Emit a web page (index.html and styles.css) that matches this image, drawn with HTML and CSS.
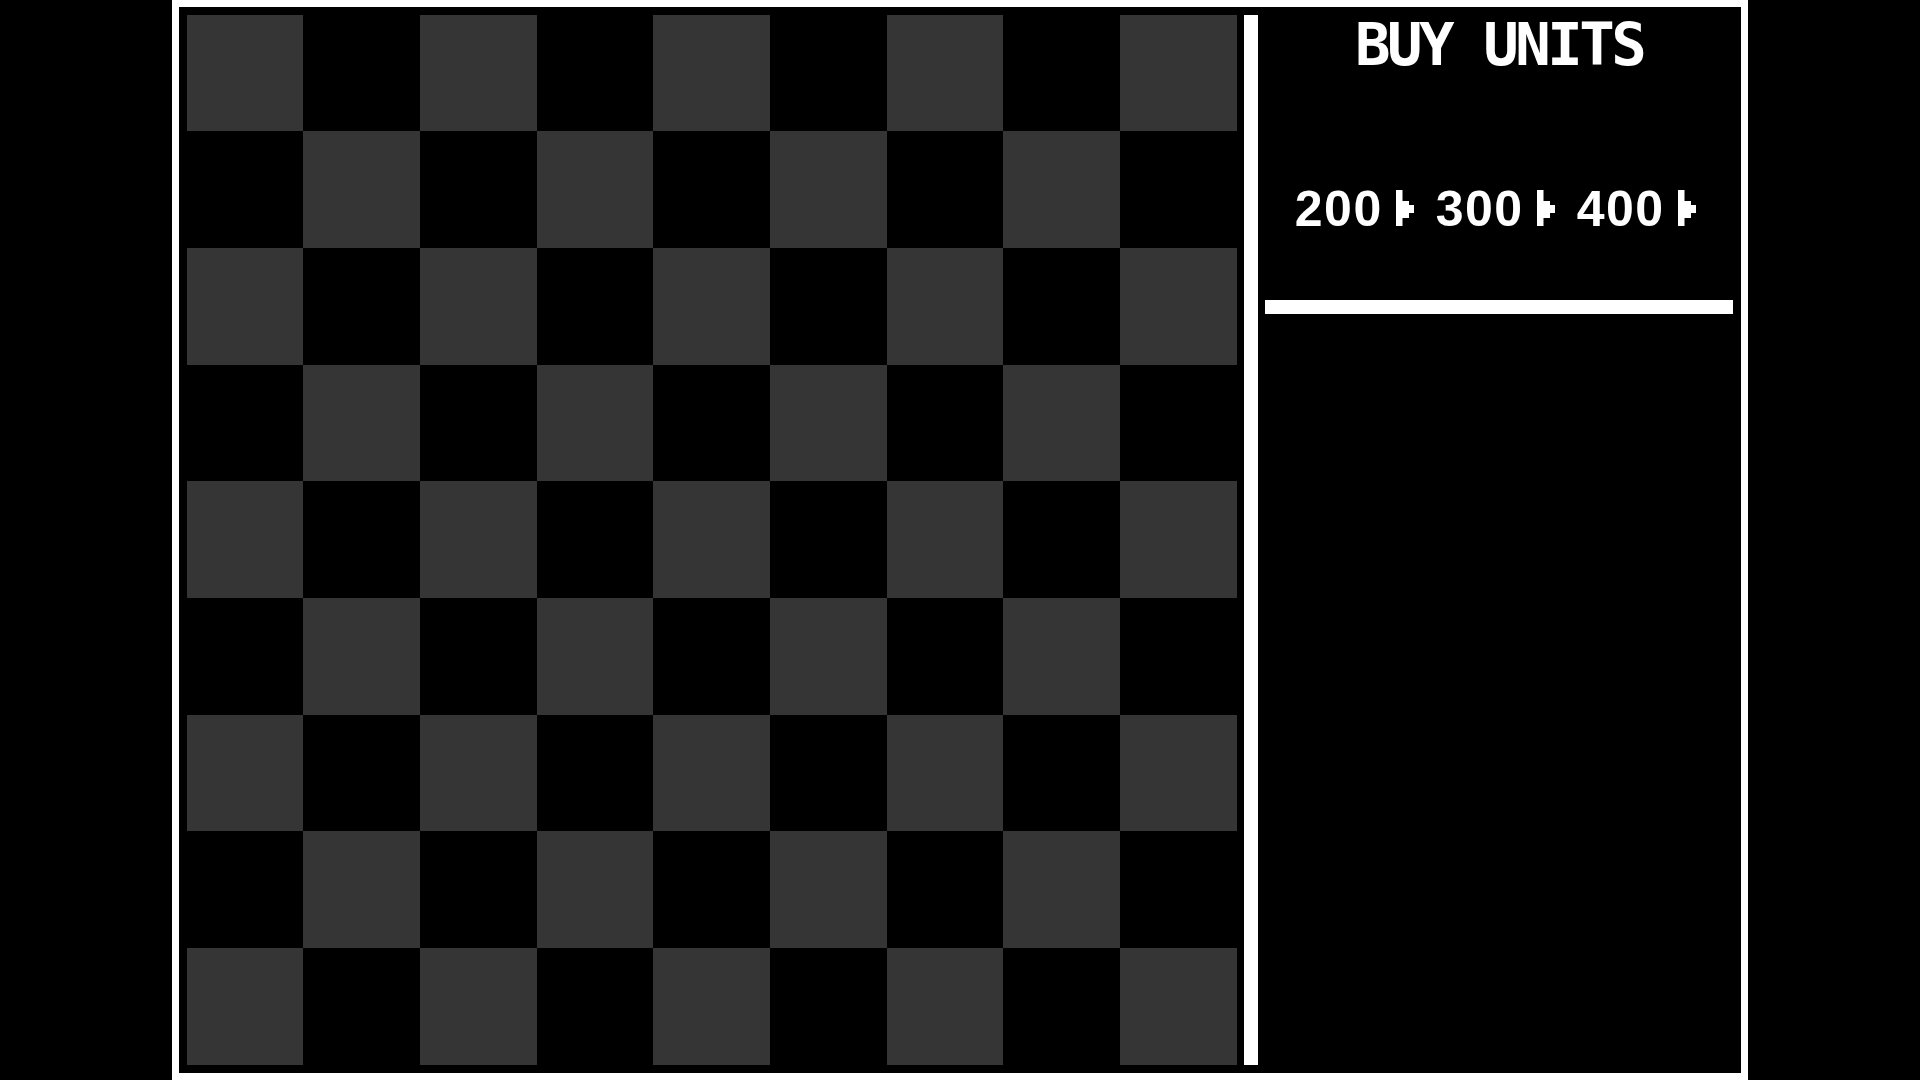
FILE: index.html
```html
<!DOCTYPE html>
<html lang="en">
<head>
<meta charset="utf-8">
<title>Buy Units</title>
<link rel="stylesheet" href="styles.css">
</head>
<body>
<div class="frame">
  <div class="board">
    <div></div><div></div><div></div><div></div><div></div><div></div><div></div><div></div><div></div>
    <div></div><div></div><div></div><div></div><div></div><div></div><div></div><div></div><div></div>
    <div></div><div></div><div></div><div></div><div></div><div></div><div></div><div></div><div></div>
    <div></div><div></div><div></div><div></div><div></div><div></div><div></div><div></div><div></div>
    <div></div><div></div><div></div><div></div><div></div><div></div><div></div><div></div><div></div>
    <div></div><div></div><div></div><div></div><div></div><div></div><div></div><div></div><div></div>
    <div></div><div></div><div></div><div></div><div></div><div></div><div></div><div></div><div></div>
    <div></div><div></div><div></div><div></div><div></div><div></div><div></div><div></div><div></div>
    <div></div><div></div><div></div><div></div><div></div><div></div><div></div><div></div><div></div>
  </div>
  <div class="divider"></div>
  <div class="panel">
    <h1 class="title">BUY UNITS</h1>
    <div class="prices">
      <div class="price"><span>200</span><svg class="coin" viewBox="0 0 18 36" width="18" height="36"><rect x="0" y="0" width="6.5" height="36"/><rect x="6" y="11" width="7" height="17"/><rect x="12.5" y="15" width="5.5" height="8"/></svg></div>
      <div class="price"><span>300</span><svg class="coin" viewBox="0 0 18 36" width="18" height="36"><rect x="0" y="0" width="6.5" height="36"/><rect x="6" y="11" width="7" height="17"/><rect x="12.5" y="15" width="5.5" height="8"/></svg></div>
      <div class="price"><span>400</span><svg class="coin" viewBox="0 0 18 36" width="18" height="36"><rect x="0" y="0" width="6.5" height="36"/><rect x="6" y="11" width="7" height="17"/><rect x="12.5" y="15" width="5.5" height="8"/></svg></div>
    </div>
    <div class="rule"></div>
  </div>
</div>
</body>
</html>
```

FILE: styles.css
```css
html, body {
  margin: 0;
  padding: 0;
  background: #000;
  height: 100%;
  overflow: hidden;
}

body {
  font-family: "DejaVu Sans Mono", "Liberation Mono", monospace;
  color: #fff;
}

.frame {
  width: 1562px;
  height: 1066px;
  margin: 0 auto;
  border: 7px solid #fff;
  display: flex;
  align-items: stretch;
  padding: 0;
  background: #000;
}

.board {
  margin: 7.7px 7.7px 8px 7.7px;
  width: 1050px;
  height: 1050px;
  display: grid;
  grid-template-columns: repeat(9, 1fr);
  grid-template-rows: repeat(9, 1fr);
  flex: none;
}

.board > div {
  background: #000;
}

.board > div:nth-child(odd) {
  background: #353535;
}

.divider {
  width: 14px;
  flex: none;
  background: #fff;
  margin: 7.7px 0 8px 0;
}

.panel {
  flex: 1;
  display: flex;
  flex-direction: column;
  padding: 7.7px 8px 0 7px;
}

.title {
  margin: 0;
  font-size: 59px;
  line-height: 59px;
  font-weight: bold;
  letter-spacing: -3.5px;
  text-align: center;
  height: 59px;
}

.prices {
  margin-top: 110px;
  display: flex;
  justify-content: center;
  gap: 22px;
  height: 50px;
  padding-right: 8px;
}

.price {
  display: flex;
  align-items: flex-start;
  font-family: "Liberation Sans", Arial, sans-serif;
  font-size: 50px;
  line-height: 50px;
  font-weight: bold;
}

.price span {
  letter-spacing: 1.5px;
}

.coin {
  fill: #fff;
  margin-left: 13px;
  margin-top: 6.5px;
  flex: none;
}

.rule {
  margin-top: 66px;
  height: 14px;
  background: #fff;
}
```
